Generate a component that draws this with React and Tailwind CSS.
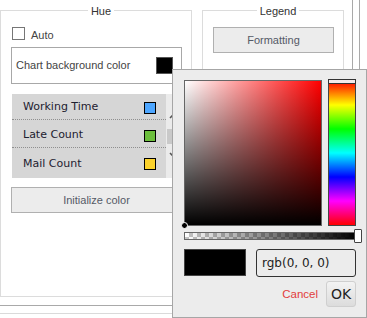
import React from "react";

const rows = [
  { label: "Working Time", color: "bg-[#4da6ff]" },
  { label: "Late Count", color: "bg-[#6cbf3c]" },
  { label: "Mail Count", color: "bg-[#fbd22c]" },
];

function Chevron({ up }) {
  return (
    <svg width="9" height="6" viewBox="0 0 9 6" className="block">
      <polyline
        points={up ? "1,5 4.5,1.5 8,5" : "1,1 4.5,4.5 8,1"}
        fill="none"
        stroke="#555"
        strokeWidth="1.6"
      />
    </svg>
  );
}

function ColorPicker() {
  return (
    <div className="absolute left-[172px] top-[69px] w-[195px] h-[249px] border border-[#a6a6a6] bg-[#ececec] pl-[11px] pt-[10px]">
      <div className="w-[172px]">
        {/* saturation / value + hue */}
        <div className="flex gap-[6px]">
          <div className="relative w-[138px] h-[146px] border border-[#666] bg-[#ff0000]">
            <div className="w-full h-full bg-linear-to-r from-white to-transparent">
              <div className="w-full h-full bg-linear-to-b from-transparent to-black"></div>
            </div>
            <span className="absolute -left-[4px] -bottom-[4px] w-[7px] h-[7px] rounded-full bg-black border border-white"></span>
          </div>
          <div className="relative w-[28px] h-[146px] border border-[#444] bg-[linear-gradient(to_bottom,#f00,#ff0,#0f0,#0ff,#00f,#f0f,#f00)]">
            <span className="absolute -left-[1px] -top-[2px] w-[28px] h-[5px] border border-[#333] bg-[#f4eaea]"></span>
          </div>
        </div>

        {/* alpha slider */}
        <div className="relative mt-[6px] w-[174px] h-[8px] border border-[#666] bg-[repeating-conic-gradient(#c4c4c4_0%_25%,#ffffff_0%_50%)] [background-size:8px_8px]">
          <div className="w-full h-full bg-linear-to-r from-transparent to-black"></div>
          <span className="absolute left-[169px] -top-[4px] w-[8px] h-[14px] rounded-[1px] border border-[#444] bg-white"></span>
        </div>

        {/* preview + value */}
        <div className="mt-[9px] flex items-start gap-[10px]">
          <div className="w-[62px] h-[27px] border border-[#444] bg-black"></div>
          <div className="w-[100px] h-[28px] rounded-[3px] border border-[#333] flex items-center pl-[5px] font-['DejaVu_Sans',sans-serif] text-[12px] text-[#222]">
            rgb(0, 0, 0)
          </div>
        </div>

        {/* actions */}
        <div className="mt-[4px] flex items-center justify-end gap-[8px]">
          <span className="text-[11.5px] text-[#e23d3d] pt-[1px]">Cancel</span>
          <div className="w-[30px] h-[26px] rounded-[3px] border border-[#cfcfcf] bg-linear-to-b from-[#f3f3f3] to-[#dcdcdc] flex items-center justify-center font-['DejaVu_Sans',sans-serif] text-[14px] text-[#222]">
            OK
          </div>
        </div>
      </div>
    </div>
  );
}

export default function App() {
  return (
    <div className="relative w-[367px] h-[318px] overflow-hidden bg-white font-['Liberation_Sans',Arial,sans-serif] text-[11px] text-[#333]">
      <div className="w-[360px] h-[314px] border-r border-b border-r-[#a9a9a9] border-b-[#dadada]">
        <div className="w-[353px] h-[306px] border-r border-b border-[#a9a9a9] pt-[3px] flex items-start gap-[10px]">
          {/* Hue */}
          <fieldset className="w-[192px] h-[294px] border border-[#dcdcdc] pl-[10px]">
            <legend className="mx-auto px-[3px] leading-[14px] text-[#333]">
              <span className="block translate-y-[1px]">Hue</span>
            </legend>

            <div className="mt-[10px] ml-[1px] flex items-center gap-[6px] h-[13px]">
              <span className="w-[13px] h-[13px] border border-[#767676] bg-white"></span>
              <span className="pt-[3px] text-[#444]">Auto</span>
            </div>

            <div className="mt-[7px] w-[171px] h-[37px] border border-[#a8a8a8] flex items-center justify-between pl-[4px] pr-[8px]">
              <span className="text-[#444]">Chart background color</span>
              <span className="w-[17px] h-[17px] border border-[#555] bg-black"></span>
            </div>

            <div className="mt-[10px] ml-[1px] w-[169px] h-[84px] flex overflow-hidden">
              <div className="w-[154px] bg-[#d6d6d6] overflow-hidden">
                <div className="-mt-[2px]">
                  {rows.map((r, i) => (
                    <div
                      key={r.label}
                      className={`h-[28px] flex items-center justify-between pl-[11px] pr-[10px] pt-[4px] font-['DejaVu_Sans',sans-serif] text-[11px] text-[#1d2130] ${
                        i < rows.length - 1 ? "border-b border-dotted border-[#8f8f8f]" : ""
                      }`}
                    >
                      <span>{r.label}</span>
                      <span className={`w-[12px] h-[12px] border border-black ${r.color}`}></span>
                    </div>
                  ))}
                </div>
              </div>
              <div className="w-[15px] bg-[#ebebeb] flex flex-col items-center pt-[19px]">
                <Chevron up />
                <div className="mt-[10px] w-[13px] h-[15px] bg-[#c9c9c9]"></div>
                <div className="mt-[8px]">
                  <Chevron />
                </div>
              </div>
            </div>

            <div className="mt-[9px] w-[171px] h-[26px] border border-[#b0b0b0] bg-[#ececec] flex items-center justify-center text-[#555a66]">
              Initialize color
            </div>
          </fieldset>

          {/* Legend */}
          <fieldset className="w-[142px] h-[294px] border border-[#dcdcdc] pl-[10px]">
            <legend className="mx-auto px-[3px] leading-[14px] text-[#333]">
              <span className="block translate-y-[1px]">Legend</span>
            </legend>
            <div className="mt-[10px] w-[121px] h-[26px] border border-[#b0b0b0] bg-[#ececec] flex items-center justify-center text-[#555a66]">
              Formatting
            </div>
          </fieldset>
        </div>
      </div>

      <ColorPicker />
    </div>
  );
}
